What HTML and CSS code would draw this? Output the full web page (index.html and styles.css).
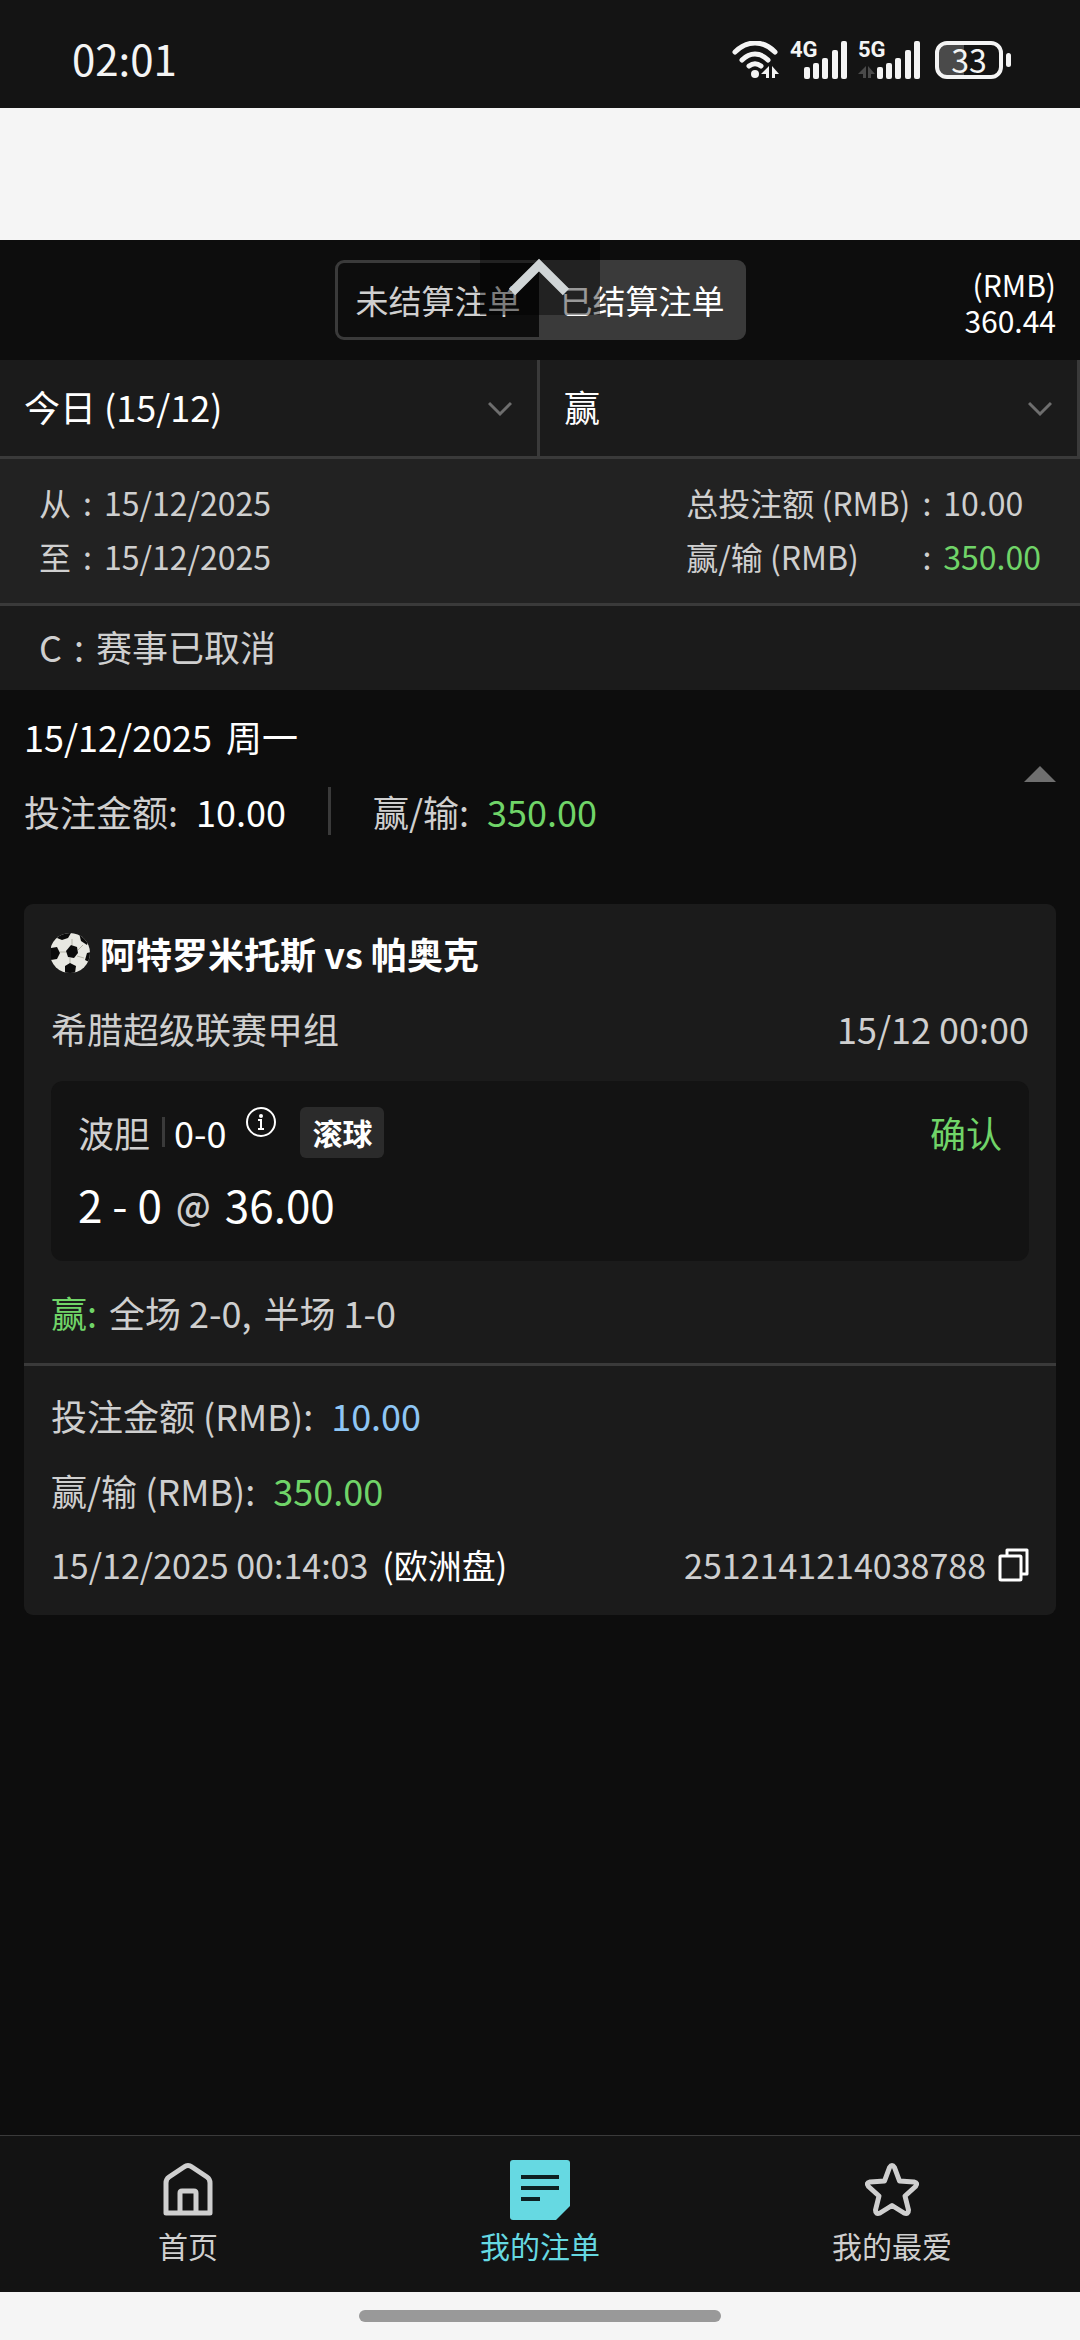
FILE: index.html
```html
<!DOCTYPE html>
<html lang="zh-CN">
<head>
  <meta charset="UTF-8">
  <meta name="viewport" content="width=device-width, initial-scale=1.0">
  <title>我的注单</title>
  <link rel="stylesheet" href="styles.css">
</head>
<body>

<!-- Status Bar -->
<div class="status-bar">
  <span class="clock">02:01</span>
  <div class="status-icons">
    <svg class="wifi-icon" width="48" height="38" viewBox="0 0 48 38" fill="none" stroke="#f4f4f4" stroke-width="5" stroke-linecap="round">
      <path d="M3 11C15 -1 31 -1 43 11"/>
      <path d="M10 19C18 11 28 11 36 19"/>
      <path d="M17 25C21 22 25 22 29 25"/>
      <circle cx="23" cy="33" r="4" fill="#f4f4f4" stroke="none"/>
      <path d="M37 25V37H34V33H29ZM40 37V25L47 33H43V37Z" fill="#f4f4f4" stroke="none"/>
    </svg>
    <div class="signal">
      <span class="signal-label">4G</span>
      <svg width="58" height="38" viewBox="0 0 58 38" fill="#f4f4f4">
        <rect x="14" y="26" width="6" height="12" rx="2"/>
        <rect x="23" y="22" width="6" height="16" rx="2"/>
        <rect x="32" y="17" width="6" height="21" rx="2"/>
        <rect x="42" y="9" width="6" height="29" rx="2"/>
        <rect x="51" y="0" width="6" height="38" rx="2"/>
      </svg>
    </div>
    <div class="signal">
      <span class="signal-label">5G</span>
      <svg width="63" height="38" viewBox="0 0 63 38" fill="#f4f4f4">
        <path d="M8 25V37H5V33H0ZM10 37V25L17 33H13V37Z" fill="#4a4a4a"/>
        <rect x="19" y="26" width="6" height="12" rx="2"/>
        <rect x="28" y="22" width="6" height="16" rx="2"/>
        <rect x="37" y="17" width="6" height="21" rx="2"/>
        <rect x="47" y="9" width="6" height="29" rx="2"/>
        <rect x="56" y="0" width="6" height="38" rx="2"/>
      </svg>
    </div>
    <div class="battery"><span class="battery-body">33</span></div>
  </div>
</div>

<div class="page-gap"></div>

<!-- Header -->
<header class="header">
  <div class="tabs">
    <button class="tab" type="button">未结算注单</button>
    <button class="tab tab-active" type="button">已结算注单</button>
  </div>
  <div class="balance">(RMB)<br>360.44</div>
  <button class="pull-handle" type="button" aria-label="收起">
    <svg width="120" height="75" viewBox="0 0 120 75" fill="none" stroke="#d0d5d6" stroke-width="9">
      <path d="M32 52L59 25L86 52"/>
    </svg>
  </button>
</header>

<main class="content">
  <!-- Filters -->
  <div class="filters">
    <label class="filter">
      <select class="filter-select" aria-label="日期">
        <option>今日 (15/12)</option>
      </select>
      <svg class="chevron" width="24" height="16" viewBox="0 0 24 16" fill="none" stroke="#6e6e6e" stroke-width="3"><path d="M1 2L12 13L23 2"/></svg>
    </label>
    <label class="filter">
      <select class="filter-select" aria-label="结果">
        <option>赢</option>
      </select>
      <svg class="chevron" width="24" height="16" viewBox="0 0 24 16" fill="none" stroke="#6e6e6e" stroke-width="3"><path d="M1 2L12 13L23 2"/></svg>
    </label>
  </div>

  <!-- Summary -->
  <div class="summary">
    <div class="summary-grid">
      <span>从</span><span>:</span><span>15/12/2025</span>
      <span>至</span><span>:</span><span>15/12/2025</span>
    </div>
    <div class="summary-grid">
      <span>总投注额 (RMB)</span><span>:</span><span>10.00</span>
      <span>赢/输 (RMB)</span><span>:</span><span class="win">350.00</span>
    </div>
  </div>
  <div class="note"><span>C</span><span>:</span><span>赛事已取消</span></div>

  <!-- Day Total -->
  <section class="day">
    <div class="day-info">
      <div class="day-date"><span>15/12/2025</span><span>周一</span></div>
      <div class="day-totals">
        <span>投注金额:</span>
        <span class="white">10.00</span>
        <span class="day-divider"></span>
        <span>赢/输:</span>
        <span class="win">350.00</span>
      </div>
    </div>
    <svg class="day-arrow" width="32" height="16" viewBox="0 0 32 16" fill="#6f6f6f"><path d="M16 0L32 16H0Z"/></svg>
  </section>

  <!-- Bet Card -->
  <article class="card">
    <div class="card-top">
      <h3 class="match">
        <svg width="40" height="40" viewBox="0 0 40 40">
          <defs><clipPath id="ball"><circle cx="19" cy="20" r="20"/></clipPath></defs>
          <g clip-path="url(#ball)">
            <rect width="40" height="40" fill="#e8e8e2"/>
            <path d="M21 12V6M27 17L32 12M26 23L33 25M19 25V31M15 19H9" stroke="#b5b5a8" stroke-width="1"/>
            <g fill="#0b0b0b">
              <path d="M20 12L26 14L27 20L23 25L17 24L15 18Z"/>
              <path d="M7 0H20L17 5L11 7L6 5Z"/>
              <path d="M28 0L38 6L36 12L30 8Z"/>
              <path d="M0 15L6 14L9 20L6 26L0 27Z"/>
              <path d="M36 20L40 19V30L34 27Z"/>
              <path d="M14 33L19 30L25 33L24 40H14Z"/>
            </g>
          </g>
        </svg>
        阿特罗米托斯 vs 帕奥克
      </h3>
      <div class="row league">
        <span>希腊超级联赛甲组</span>
        <span>15/12 00:00</span>
      </div>
      <div class="bet">
        <div class="row">
          <div class="bet-type">
            <span>波胆</span>
            <span class="bet-divider"></span>
            <span class="white">0-0</span>
            <svg class="info-icon" width="30" height="30" viewBox="0 0 30 30" fill="none" stroke="#fff" stroke-width="2">
              <circle cx="15" cy="15" r="14"/>
              <circle cx="15" cy="9" r="2" fill="#fff" stroke="none"/>
              <path d="M12 13H15V22M12 22H18"/>
            </svg>
            <span class="badge">滚球</span>
          </div>
          <span class="win">确认</span>
        </div>
        <div class="odds"><span>2 - 0</span><span class="at">@</span><span>36.00</span></div>
      </div>
      <div class="result"><span class="win">赢:</span><span>全场 2-0,</span><span>半场 1-0</span></div>
    </div>
    <div class="card-bottom">
      <div class="amount"><span>投注金额 (RMB):</span><span class="stake">10.00</span></div>
      <div class="amount"><span>赢/输 (RMB):</span><span class="win">350.00</span></div>
      <div class="row ticket">
        <span class="ticket-time"><span>15/12/2025 00:14:03</span><span class="white">(欧洲盘)</span></span>
        <span class="ticket-id">2512141214038788
          <button class="copy-button" type="button" aria-label="复制">
            <svg width="31" height="34" viewBox="0 0 31 34" fill="none" stroke="#fff" stroke-width="3" stroke-linejoin="round">
              <rect x="2" y="8" width="21" height="24" rx="1"/>
              <path d="M9 8V2H29V26H23"/>
            </svg>
          </button>
        </span>
      </div>
    </div>
  </article>
</main>

<!-- Bottom Navigation -->
<nav class="bottom-nav">
  <a class="nav-item" href="#">
    <svg width="60" height="60" viewBox="0 0 60 60" fill="none" stroke="#cfcfcf" stroke-width="5" stroke-linejoin="round">
      <path d="M8 53V23Q8 19 11 17L26 7Q30 4 34 7L49 17Q52 19 52 23V53Z"/>
      <path d="M22 53V33Q22 31 24 31H36Q38 31 38 33V53"/>
    </svg>
    首页
  </a>
  <a class="nav-item nav-active" href="#">
    <svg width="60" height="60" viewBox="0 0 60 60">
      <path d="M3 0H57Q60 0 60 3V46L46 60H3Q0 60 0 57V3Q0 0 3 0Z" fill="#66d9e2"/>
      <path d="M11 17H49M11 28H49M11 39H30" stroke="#0d2022" stroke-width="4"/>
    </svg>
    我的注单
  </a>
  <a class="nav-item" href="#">
    <svg width="60" height="60" viewBox="0 0 60 60" fill="none" stroke="#cfcfcf" stroke-width="5" stroke-linejoin="round">
      <path d="M27.500 7.500Q30 3.500 32.500 7.500L37.500 21L52 22Q56.500 23 53.500 26.500L43 36L46.500 50Q46.500 55 42 53L30 45.500L18 53Q13.500 55 13.500 50L17 36L6.500 26.500Q3.500 23 8 22L22.500 21Z"/>
    </svg>
    我的最爱
  </a>
</nav>
<div class="gesture-bar"><span class="gesture-pill"></span></div>

</body>
</html>
```

FILE: styles.css
```css
* {
  box-sizing: border-box;
}
body {
  font-family: "Noto Sans CJK SC", sans-serif;
  font-size: 36px;
  line-height: 54px;
  margin: 0;
  min-height: 100vh;
  display: flex;
  flex-direction: column;
  background-color: #0d0d0d;
  color: #cfcfcf;
}
svg {
  display: block;
  flex-shrink: 0;
}
button, select {
  font: inherit;
  border: none;
  background: none;
  margin: 0;
  padding: 0;
}
.white {
  color: white;
}
.win {
  color: #70d468;
}
.stake {
  color: #8ec6f5;
}
.row {
  display: flex;
  justify-content: space-between;
}

/* Status Bar */
.status-bar {
  height: 108px;
  padding: 8px 69px 0 72px;
  display: flex;
  align-items: center;
  justify-content: space-between;
  background-color: #141414;
  color: #f4f4f4;
}
.clock {
  font-size: 42px;
}
.status-icons {
  display: flex;
  align-items: center;
  gap: 10px;
  padding-top: 4px;
}
.signal {
  position: relative;
}
.signal-label {
  position: absolute;
  top: -3px;
  left: 0;
  font-family: Roboto, sans-serif;
  font-size: 22px;
  font-weight: 700;
  line-height: 24px;
}
.battery {
  display: flex;
  align-items: center;
  margin-left: 4px;
}
.battery::after {
  content: "";
  width: 5px;
  height: 14px;
  margin-left: 3px;
  border-radius: 3px;
  background-color: #f4f4f4;
}
.battery-body {
  width: 68px;
  height: 38px;
  border: 4px solid #f4f4f4;
  border-radius: 12px;
  background: linear-gradient(90deg, #4a4a4a 42%, transparent 42%);
  font-size: 32px;
  line-height: 28px;
  text-align: center;
}
.page-gap {
  height: 132px;
  background-color: #f5f5f5;
}

/* Header */
.header {
  position: relative;
  height: 120px;
  padding: 0 24px;
  display: grid;
  grid-template-columns: 1fr auto 1fr;
  align-items: center;
}
.tabs {
  grid-column: 2;
  display: flex;
  height: 80px;
  border: 3px solid #3a3a3a;
  border-radius: 9px;
}
.tab {
  padding: 0 18px;
  color: #cfcfcf;
  font-size: 33px;
}
.tab-active {
  padding-left: 21px;
  background-color: #3a3a3a;
  color: white;
}
.balance {
  padding-top: 4px;
  color: white;
  font-size: 30px;
  line-height: 36px;
  text-align: right;
}
.pull-handle {
  position: absolute;
  top: 0;
  left: calc(50% - 60px);
  background-color: rgba(0, 0, 0, 0.4);
}

/* Filters */
.filters {
  display: flex;
  border-bottom: 3px solid #3a3a3a;
  background-color: #1b1b1b;
}
.filter {
  flex: 1;
  height: 96px;
  position: relative;
  border-right: 3px solid #3a3a3a;
}
.filter-select {
  width: 100%;
  height: 100%;
  padding: 0 24px 4px;
  appearance: none;
  color: white;
}
.chevron {
  position: absolute;
  right: 25px;
  top: 41px;
  pointer-events: none;
}

/* Summary */
.summary {
  display: flex;
  justify-content: space-between;
  padding: 16px 39px 20px;
  border-bottom: 3px solid #3a3a3a;
  background-color: #222;
  font-size: 32px;
}
.summary-grid {
  display: grid;
  grid-template-columns: auto auto auto;
  column-gap: 12px;
}
.note {
  display: flex;
  gap: 12px;
  padding: 13px 39px 17px;
  background-color: #1b1b1b;
}

/* Day Total */
.day {
  display: flex;
  align-items: center;
  justify-content: space-between;
  padding: 19px 24px 66px;
}
.day-date {
  display: flex;
  gap: 14px;
  color: white;
}
.day-totals {
  display: flex;
  align-items: center;
  gap: 18px;
  margin-top: 21px;
}
.day-divider {
  width: 3px;
  height: 48px;
  margin: 0 24px;
  background-color: #3a3a3a;
}

/* Bet Card */
.card {
  margin: 0 24px;
  border-radius: 9px;
  background-color: #1b1b1b;
}
.card-top {
  padding: 22px 27px 24px;
  border-bottom: 3px solid #3a3a3a;
}
.match {
  display: flex;
  align-items: center;
  gap: 9px;
  margin: 0;
  color: white;
  font-size: 36px;
  font-weight: 700;
}
.league {
  margin-top: 21px;
}
.bet {
  margin-top: 26px;
  padding: 24px 27px;
  border-radius: 12px;
  background-color: #131313;
}
.bet-type {
  display: flex;
  align-items: center;
}
.bet-divider {
  width: 3px;
  height: 30px;
  margin: 0 9px 0 12px;
  background-color: #3a3a3a;
}
.info-icon {
  align-self: flex-start;
  margin: 2px 24px 0 20px;
}
.badge {
  padding: 0 12px;
  border-radius: 6px;
  background-color: #2b2b2b;
  color: white;
  font-size: 30px;
  font-weight: 700;
  line-height: 51px;
}
.odds {
  display: flex;
  gap: 14px;
  margin-top: 18px;
  padding-bottom: 6px;
  color: white;
  font-size: 44px;
}
.at {
  color: #cfcfcf;
  font-size: 36px;
  font-weight: 500;
}
.result {
  display: flex;
  gap: 12px;
  margin-top: 24px;
}
.card-bottom {
  padding: 22px 27px 21px;
}
.amount {
  display: flex;
  gap: 18px;
  margin-bottom: 21px;
}
.ticket {
  padding-bottom: 2px;
  font-size: 34px;
}
.ticket-time {
  display: flex;
  gap: 14px;
}
.ticket-id {
  display: flex;
  align-items: center;
  gap: 12px;
}

/* Bottom Navigation */
.bottom-nav {
  display: flex;
  margin-top: auto;
  padding: 24px 12px 26px;
  border-top: 1px solid #3a3a3a;
  background-color: #131313;
}
.nav-item {
  flex: 1;
  display: flex;
  flex-direction: column;
  align-items: center;
  gap: 4px;
  color: #cfcfcf;
  font-size: 30px;
  line-height: 42px;
  text-decoration: none;
}
.nav-active {
  color: #66d9e2;
}
.gesture-bar {
  height: 48px;
  display: flex;
  align-items: center;
  justify-content: center;
  background-color: #f5f5f5;
}
.gesture-pill {
  width: 362px;
  height: 12px;
  border-radius: 6px;
  background-color: #999;
}
```
